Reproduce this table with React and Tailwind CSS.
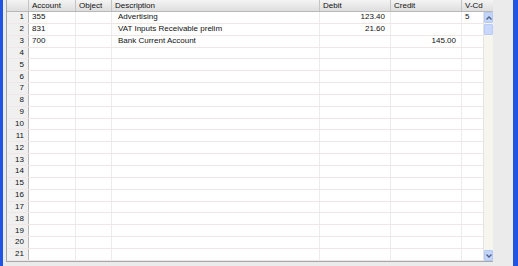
import React from "react";

const rows = [
  { acc: "355", desc: "Advertising", debit: "123.40", credit: "", vcd: "5" },
  { acc: "831", desc: "VAT Inputs Receivable prelim", debit: "21.60", credit: "", vcd: "" },
  { acc: "700", desc: "Bank Current Account", debit: "", credit: "145.00", vcd: "" },
];

const allRows = Array.from({ length: 21 }, (_, i) => ({
  n: i + 1,
  ...(rows[i] || { acc: "", desc: "", debit: "", credit: "", vcd: "" }),
}));

const HeadCell = ({ w, children, last }) => (
  <div
    className={`${w} h-full flex items-center pl-[3px] border-r border-[#c4c4c4] bg-gradient-to-b from-[#f4f4f4] to-[#dedede] ${
      last ? "flex-1 border-r-0" : ""
    }`}
  >
    {children}
  </div>
);

export default function App() {
  return (
    <div
      className="w-[518px] h-[266px] flex bg-[#ebebeb] overflow-hidden text-[8px] text-[#111]"
      style={{ fontFamily: '"Liberation Sans", Arial, sans-serif' }}
    >
      {/* window frame, left */}
      <div className="w-[3px] h-full bg-[#1f55e2]" />

      <div className="flex-1 pl-[3px] pr-[20px] pb-[4px] flex">
        <div className="w-[487px] h-full flex flex-col bg-white border-l border-b border-[#a8a8a8]">
          {/* column headers */}
          <div className="h-[12px] flex border-b border-[#b8b8b8] shrink-0">
            <HeadCell w="w-[22px]" />
            <HeadCell w="w-[47px]">Account</HeadCell>
            <HeadCell w="w-[36px]">Object</HeadCell>
            <HeadCell w="w-[208px]">Description</HeadCell>
            <HeadCell w="w-[71px]">Debit</HeadCell>
            <HeadCell w="w-[71px]">Credit</HeadCell>
            <HeadCell w="w-[32px]" last>
              V-Cd
            </HeadCell>
          </div>

          <div className="flex-1 flex min-h-0">
            {/* rows */}
            <div className="w-[477px] flex flex-col">
              {allRows.map((r) => (
                <div key={r.n} className="h-[11.85px] flex border-b border-[#f1e6e6]">
                  <div className="w-[22px] h-full flex items-center justify-end pr-[4px] bg-[#f0f0f0] border-r border-[#b8b8b8]">
                    {r.n}
                  </div>
                  <div className="w-[47px] h-full flex items-center pl-[3px] border-r border-[#ececec]">
                    {r.acc}
                  </div>
                  <div className="w-[36px] h-full border-r border-[#ececec]" />
                  <div className="w-[208px] h-full flex items-center pl-[6px] border-r border-[#ececec]">
                    {r.desc}
                  </div>
                  <div className="w-[71px] h-full flex items-center justify-end pr-[5px] border-r border-[#ececec]">
                    {r.debit}
                  </div>
                  <div className="w-[71px] h-full flex items-center justify-end pr-[5px] border-r border-[#ececec]">
                    {r.credit}
                  </div>
                  <div className="flex-1 h-full flex items-center pl-[3px]">{r.vcd}</div>
                </div>
              ))}
            </div>

            {/* vertical scrollbar */}
            <div className="w-[10px] flex flex-col bg-[#f7f6ee] border-l border-[#e4e4e4]">
              <div className="h-[11px] flex items-center justify-center bg-[#c5d5fa] rounded-[1px] border border-[#b4c8f4]">
                <svg width="6" height="4" viewBox="0 0 6 4">
                  <path d="M0.5 3.5 L3 1 L5.5 3.5" fill="none" stroke="#4d6185" strokeWidth="1.3" />
                </svg>
              </div>
              <div className="h-[11px] mt-[1px] bg-[#c8d7fb] border border-[#b8cbf5] rounded-[1px]" />
              <div className="flex-1" />
              <div className="h-[11px] flex items-center justify-center bg-[#c5d5fa] rounded-[1px] border border-[#b4c8f4]">
                <svg width="6" height="4" viewBox="0 0 6 4">
                  <path d="M0.5 0.5 L3 3 L5.5 0.5" fill="none" stroke="#4d6185" strokeWidth="1.3" />
                </svg>
              </div>
            </div>
          </div>
        </div>
      </div>

      {/* window frame, right */}
      <div className="w-[5px] h-full bg-[#1f55e2]" />
    </div>
  );
}
